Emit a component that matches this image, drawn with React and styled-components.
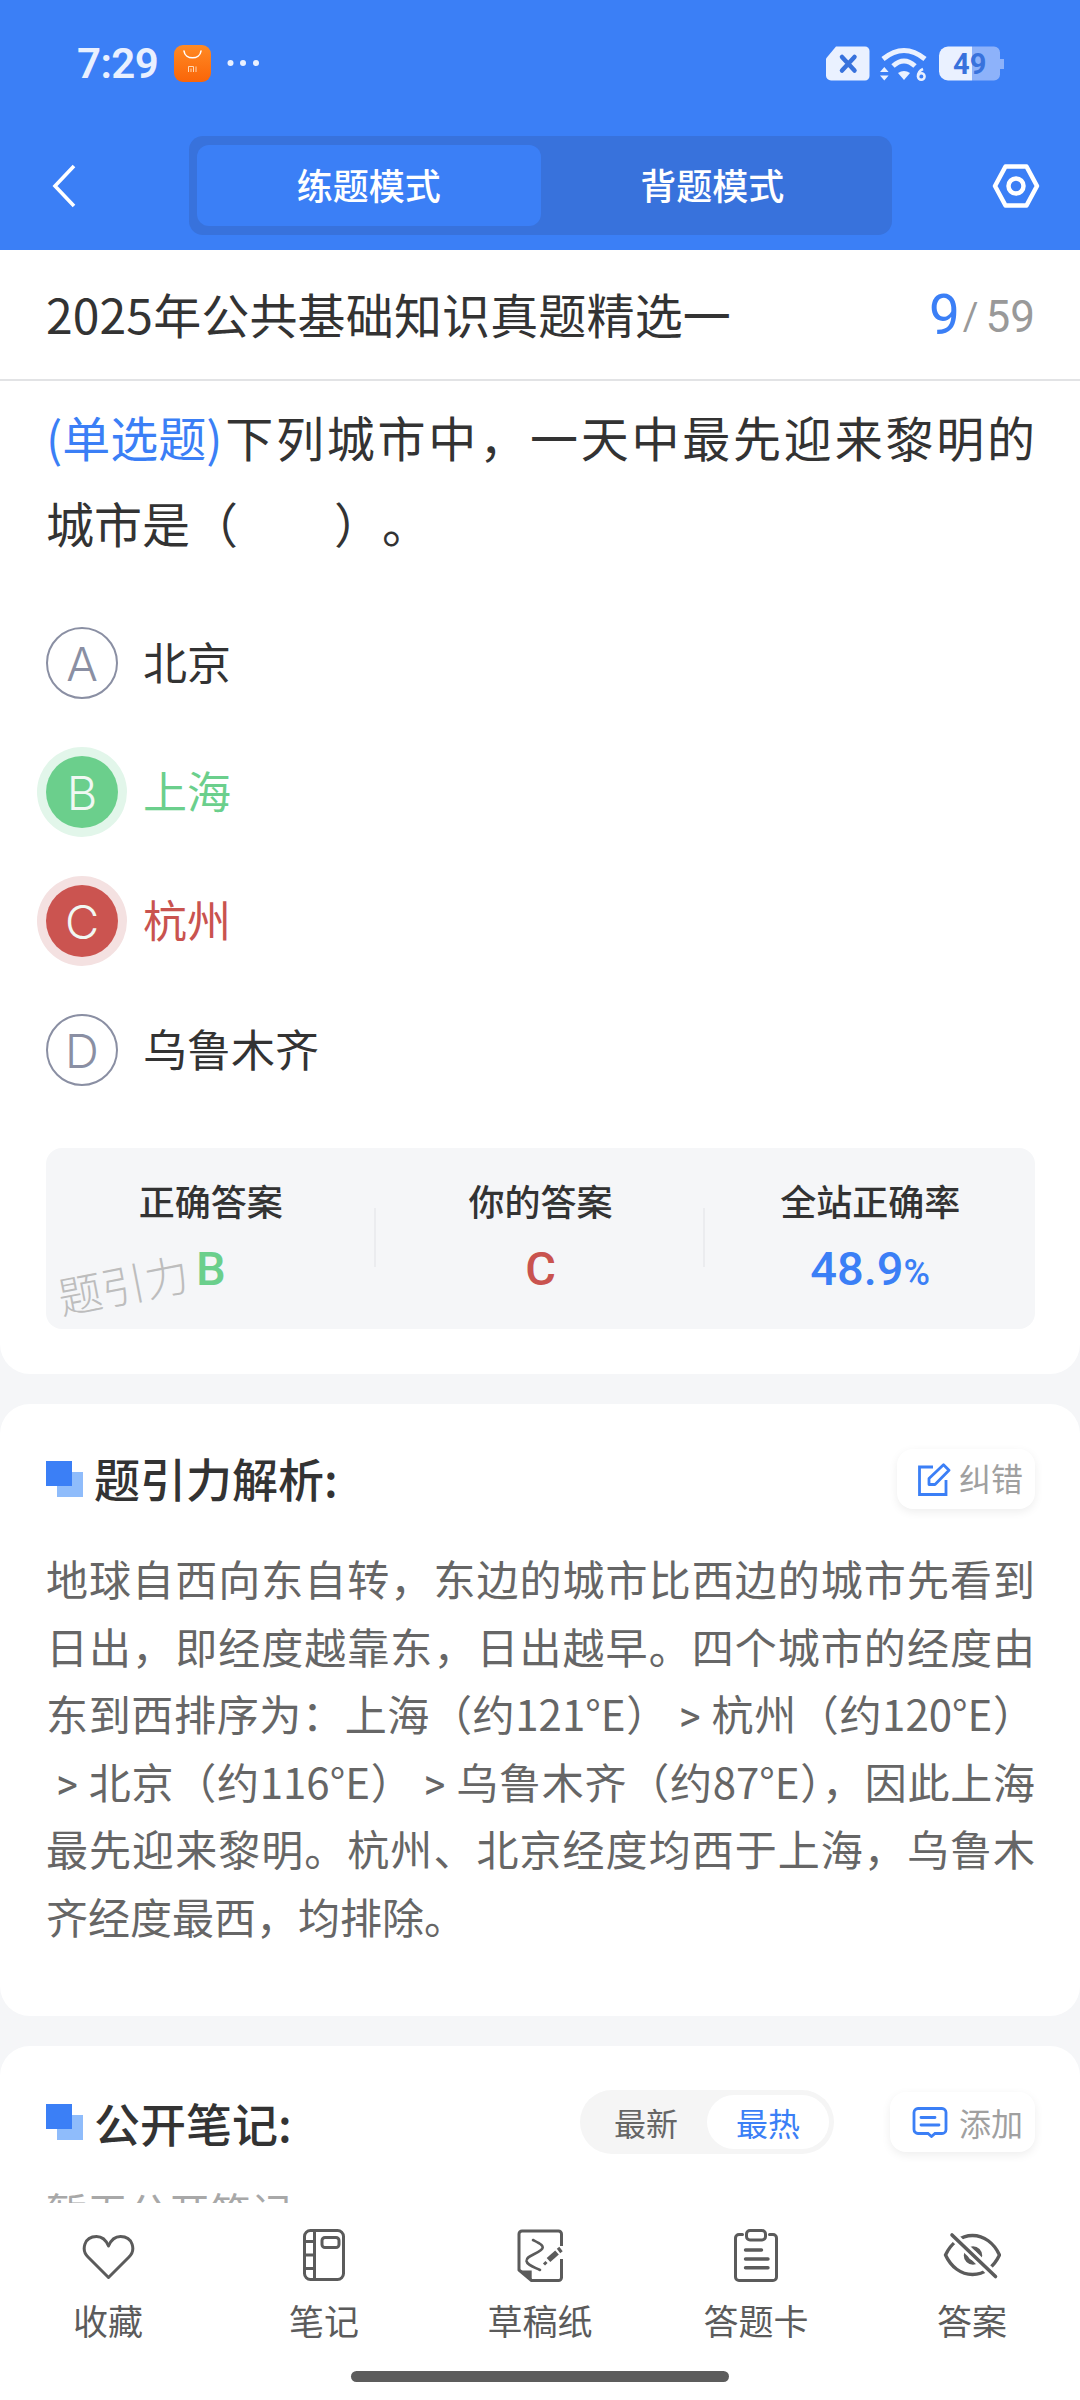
import React from "react";
import styled, { createGlobalStyle } from "styled-components";

const CJK = `"Noto Sans CJK SC", "Noto Sans", sans-serif`;
const BLUE = "#3b7ff6";

const Global = createGlobalStyle`
  html, body { margin: 0; padding: 0; background: #f5f6f8; }
  * { box-sizing: border-box; }
  #root { width: 1080px; height: 2400px; }
`;

const Page = styled.div`
  width: 1080px;
  height: 2400px;
  display: flex;
  flex-direction: column;
  overflow: hidden;
  font-family: ${CJK};
  color: #333;
  background: #f5f6f8;
`;
const Header = styled.header`
  height: 250px;
  flex: none;
  background: ${BLUE};
  display: flex;
  flex-direction: column;
`;
const StatusBar = styled.div`
  height: 136px;
  padding: 45px 76px 0 77px;
  display: flex;
  align-items: flex-start;
  justify-content: space-between;
`;
const StatusGroup = styled.div`
  display: flex;
  align-items: center;
  height: 36px;
`;
const Time = styled.span`
  font-family: Roboto, sans-serif;
  font-weight: 600;
  font-size: 42px;
  line-height: 36px;
  padding-top: 2px;
  color: #e9f0ff;
  width: 97px;
  letter-spacing: -0.6px;
`;
const NavBar = styled.div`
  height: 99px;
  padding: 0 40px 0 52px;
  display: flex;
  align-items: center;
  justify-content: space-between;
`;
const ModeSwitch = styled.div`
  width: 703px;
  height: 99px;
  margin-left: 13px;
  padding: 9px 8px;
  background: #3872dc;
  border-radius: 14px;
  display: grid;
  grid-template-columns: 1fr 1fr;
`;
const Mode = styled.div`
  display: flex;
  align-items: center;
  justify-content: center;
  padding-bottom: 4px;
  background: ${(p) => (p.$active ? BLUE : "transparent")};
  border-radius: 12px;
  color: #fff;
  font-size: 36px;
  font-weight: 500;
`;
const TitleBar = styled.div`
  height: 131px;
  flex: none;
  background: #fff;
  border-bottom: 2px solid #e2e3e5;
  padding: 0 45px 4px 46px;
  display: flex;
  align-items: center;
  justify-content: space-between;
`;
const PaperTitle = styled.div`
  font-size: 48px;
  line-height: 60px;
  letter-spacing: 0.15px;
  color: #333;
`;
const Counter = styled.div`
  display: flex;
  align-items: center;
  padding-top: 9px;
  font-family: Roboto, sans-serif;
  color: #999;
  font-size: 44px;
  line-height: 1;
`;
const Current = styled.span`
  color: ${BLUE};
  font-size: 55px;
  margin-bottom: 3px;
`;
const Slash = styled.span`
  font-size: 38px;
  margin: 0 7px 0 3px;
`;
const Scroll = styled.main`
  flex: 1;
  min-height: 0;
  overflow: hidden;
  display: flex;
  flex-direction: column;
  gap: 30px;
`;
const Card = styled.section`
  background: #fff;
  flex: none;
  height: ${(p) => p.$h}px;
  padding: ${(p) => p.$pad || "0 45px 0 46px"};
  border-radius: ${(p) => p.$radius || "30px"};
`;
const Question = styled.div`
  font-size: 48px;
  line-height: 86px;
  text-align: justify;
  text-spacing-trim: space-all;
  color: #333;
  padding-top: 12px;
  width: 989px;
`;
const Tag = styled.span`
  display: inline-block;
  color: ${BLUE};
`;
const Options = styled.div`
  display: flex;
  flex-direction: column;
  gap: 57px;
  margin-top: 62px;
`;
const Option = styled.div`
  display: flex;
  align-items: center;
  gap: 25px;
  height: 72px;
  font-size: 44px;
  color: ${(p) =>
    p.$state === "right" ? "#6bcf8c" : p.$state === "wrong" ? "#c9534f" : "#333"};
`;
const OptionText = styled.span`
  padding-bottom: 5px;
`;
const Bullet = styled.div`
  width: 72px;
  height: 72px;
  border-radius: 50%;
  flex: none;
  display: flex;
  align-items: center;
  justify-content: center;
  font-family: Inter, Roboto, sans-serif;
  font-weight: 300;
  font-size: 47px;
  color: ${(p) => (p.$state ? "#f1f8f3" : "#8a8fa3")};
  background: ${(p) =>
    p.$state === "right" ? "#6bcf8c" : p.$state === "wrong" ? "#cb5450" : "#fff"};
  border: ${(p) => (p.$state ? "none" : "2px solid #8a8fa3")};
  box-shadow: ${(p) =>
    p.$state === "right"
      ? "0 0 0 9px #e2f6ea"
      : p.$state === "wrong"
      ? "0 0 0 9px #f4e1e1"
      : "none"};
`;
const Stats = styled.div`
  position: relative;
  margin-top: 62px;
  height: 181px;
  width: 989px;
  background: #f5f6f8;
  border-radius: 16px;
  display: grid;
  grid-template-columns: repeat(3, 1fr);
  padding-top: 32px;
  overflow: hidden;
`;
const Stat = styled.div`
  position: relative;
  display: flex;
  flex-direction: column;
  align-items: center;
  &:not(:last-of-type)::after {
    content: "";
    position: absolute;
    right: 0;
    top: 28px;
    height: 59px;
    width: 2px;
    background: #ebecef;
  }
`;
const StatLabel = styled.div`
  font-size: 36px;
  line-height: 40px;
  font-weight: 500;
  color: #333;
`;
const StatValue = styled.div`
  margin-top: 24px;
  font-family: Roboto, sans-serif;
  font-size: 47px;
  line-height: 50px;
  font-weight: 500;
  color: ${(p) => p.$color};
`;
const Percent = styled.span`
  font-size: 36px;
`;
const Watermark = styled.span`
  position: absolute;
  left: 12px;
  top: 126px;
  font-size: 44px;
  line-height: 44px;
  color: #bdbdbd;
  font-weight: 300;
  transform: rotate(-11deg);
  transform-origin: left center;
`;
const SectionHead = styled.div`
  display: flex;
  align-items: center;
  justify-content: space-between;
  height: 62px;
`;
const Heading = styled.div`
  display: flex;
  align-items: center;
  gap: 11px;
`;
const HeadingText = styled.div`
  font-size: 46px;
  font-weight: 500;
  line-height: 60px;
  padding-bottom: ${(p) => p.$lift || 0}px;
  color: #333;
`;
const Actions = styled.div`
  display: flex;
  align-items: center;
  gap: 56px;
`;
const ActionButton = styled.div`
  height: 60px;
  padding: 0 12px 0 ${(p) => p.$pl}px;
  border-radius: 16px;
  background: #fff;
  box-shadow: 0 3px 10px rgba(0, 0, 0, 0.07);
  display: flex;
  align-items: center;
  gap: ${(p) => p.$gap}px;
  font-size: 32px;
  color: #a0a0a0;
`;
const ActionLabel = styled.span`
  padding-bottom: ${(p) => p.$lift || 0}px;
`;
const Sort = styled.div`
  width: 254px;
  height: 64px;
  padding: 5px;
  border-radius: 32px;
  background: #f5f5f5;
  display: grid;
  grid-template-columns: 122px 122px;
`;
const SortItem = styled.div`
  display: flex;
  align-items: center;
  justify-content: center;
  border-radius: 27px;
  font-size: 32px;
  color: ${(p) => (p.$active ? BLUE : "#666")};
  background: ${(p) => (p.$active ? "#fff" : "transparent")};
`;
const Analysis = styled.div`
  margin-top: 34px;
  width: 989px;
  font-size: 42px;
  line-height: 67.6px;
  color: #666;
  text-align: justify;
`;
const Gt = styled.span`
  display: inline-block;
  width: 42px;
  line-height: 1;
  text-align: center;
  font-family: Roboto, sans-serif;
`;
const EmptyNote = styled.div`
  margin-top: 29px;
  font-size: 41px;
  line-height: 56px;
  color: #a8a8a8;
`;
const BottomBar = styled.nav`
  height: 197px;
  flex: none;
  background: #fff;
  display: flex;
  flex-direction: column;
`;
const Tabs = styled.div`
  display: grid;
  grid-template-columns: repeat(5, 1fr);
  padding-top: 24px;
`;
const TabItem = styled.div`
  display: flex;
  flex-direction: column;
  align-items: center;
  color: #5b5b5b;
  font-size: 35px;
  line-height: 44px;
  gap: 15px;
`;
const IconBox = styled.div`
  height: 56px;
  display: flex;
  align-items: center;
  justify-content: center;
`;
const HomeIndicator = styled.div`
  width: 378px;
  height: 11px;
  border-radius: 6px;
  background: #5c5c5c;
  margin: 29px auto 0;
`;

const Squares = () => (
  <svg width="37" height="36" viewBox="0 0 37 36" style={{ flex: "none" }}>
    <rect x="11" y="11" width="26" height="25" fill="#8fbcfb" />
    <rect x="0" y="0" width="26" height="25" fill="#3b7ff6" />
  </svg>
);

const MiStore = () => (
  <svg width="37" height="37" viewBox="0 0 37 37" style={{ marginRight: 16 }}>
    <defs>
      <linearGradient id="mi" x1="0" y1="0" x2="0" y2="1">
        <stop offset="0" stopColor="#ff8a24" />
        <stop offset="1" stopColor="#fa6508" />
      </linearGradient>
    </defs>
    <rect width="37" height="37" rx="9" fill="url(#mi)" />
    <path d="M10 6c1 9 16 9 17 0" fill="none" stroke="#fff" strokeWidth="1.6" strokeLinecap="round" />
    <path d="M14.5 27v-5.500h5V27M17 23.500V27M22 21.500V27" fill="none" stroke="#ffd9b5" strokeWidth="1" />
  </svg>
);

const Dots = () => (
  <svg width="32" height="8" viewBox="0 0 32 8">
    <circle cx="3.500" cy="4" r="3" fill="#eaf1ff" />
    <circle cx="16" cy="4" r="3" fill="#eaf1ff" />
    <circle cx="29" cy="4" r="3" fill="#eaf1ff" />
  </svg>
);

const StatusIcons = () => (
  <svg width="178" height="37" viewBox="0 0 178 37">
    <path d="M10 1.500H39a4.500 4.500 0 0 1 4.500 4.500V31a4.500 4.500 0 0 1-4.500 4.500H5a5 5 0 0 1-5-5V13.500z" fill="#eaf1ff" />
    <path d="M16 12l12.500 13.500M28.500 12L16 25.500" stroke="#3872dc" strokeWidth="4.500" strokeLinecap="round" />
    <path d="M57 14Q78-3 99 14" fill="none" stroke="#eaf1ff" strokeWidth="5" />
    <path d="M67 21Q78 11 89 21" fill="none" stroke="#eaf1ff" strokeWidth="5" />
    <path d="M72 28Q78 24 84 28L78 35z" fill="#eaf1ff" />
    <path d="M54 27l4.300-5 4.300 5zM54 30.500h8.600l-4.300 5z" fill="#eaf1ff" />
    <circle cx="95.300" cy="31.500" r="3.300" fill="none" stroke="#eaf1ff" strokeWidth="2.500" />
    <path d="M92 31.500c0-3 1.500-6 5-7.500" fill="none" stroke="#eaf1ff" strokeWidth="2.500" />
    <path d="M146 1.500h22a6 6 0 0 1 6 6V14h4v10h-4v5.500a6 6 0 0 1-6 6h-22z" fill="#8db2fa" />
    <path d="M122 1.500h24v34h-24a9 9 0 0 1-9-9v-16a9 9 0 0 1 9-9z" fill="#eaf1ff" />
    <text x="127" y="29" fontFamily="Roboto, sans-serif" fontWeight="700" fontSize="29" fill="#3872dc">49</text>
  </svg>
);

const Back = () => (
  <svg width="24" height="44" viewBox="0 0 24 44">
    <path d="M22 2L3 22l19 20" fill="none" stroke="#fff" strokeWidth="3.600" />
  </svg>
);

const Gear = () => (
  <svg width="48" height="44" viewBox="0 0 48 44">
    <path d="M13.500 2.500h21L45 22 34.500 41.500h-21L3 22z" fill="none" stroke="#fff" strokeWidth="4.500" strokeLinejoin="round" />
    <circle cx="24" cy="22" r="7.500" fill="none" stroke="#fff" strokeWidth="4.500" />
  </svg>
);

const EditIcon = () => (
  <svg width="33" height="33" viewBox="0 0 33 33">
    <path d="M15 4H1.500v27.500H28V17" fill="none" stroke="#3b7ff6" strokeWidth="2.800" />
    <path d="M11 21.500v-6L25.500 1.800l5.500 5.500L17 21.500z" fill="none" stroke="#3b7ff6" strokeWidth="2.800" strokeLinejoin="round" />
  </svg>
);

const CommentIcon = () => (
  <svg width="36" height="31" viewBox="0 0 36 31">
    <path d="M6 1.500h24a4 4 0 0 1 4 4v17a4 4 0 0 1-4 4h-7l-3.500 3-3.500-3H6a4 4 0 0 1-4-4v-17a4 4 0 0 1 4-4z" fill="none" stroke="#3b7ff6" strokeWidth="2.800" />
    <path d="M9 10.500h14M9 18h18" stroke="#3b7ff6" strokeWidth="2.800" strokeLinecap="round" />
  </svg>
);

const stroke = { fill: "none", stroke: "#5b5b5b", strokeWidth: 3 };

const Heart = () => (
  <svg width="54" height="54" viewBox="0 0 54 54">
    <path d="M27.500 49.500L7 29C0 22 3 8.500 15.500 8.500 21 8.500 25 12 27.500 18 30 12 34 8.500 39.500 8.500 52 8.500 55 22 48 29z" {...stroke} strokeLinejoin="round" />
  </svg>
);
const Notebook = () => (
  <svg width="44" height="54" viewBox="0 0 44 54">
    <rect x="2.500" y="2.500" width="39" height="49" rx="6" {...stroke} />
    <path d="M12.500 2.500v49M2.500 13.500h10M2.500 27h10M2.500 40.500h10" {...stroke} />
    <rect x="20" y="9.500" width="17" height="10" rx="3" {...stroke} />
  </svg>
);
const Draft = () => (
  <svg width="46" height="54" viewBox="0 0 46 54">
    <path d="M44.500 18V6a3 3 0 0 0-3-3H5a3 3 0 0 0-3 3v36l12.500 10.500h27a3 3 0 0 0 3-3V31" {...stroke} strokeLinejoin="round" />
    <path d="M3 42.500h11.700V53z" fill="#5b5b5b" />
    <path d="M16 12C22 15 29 18 24 22 18 27 9 28 9.500 33 10 37 17 39 23 42" {...stroke} strokeWidth="2.600" strokeLinecap="round" />
    <path d="M31.500 32L40 24.500" fill="none" stroke="#5b5b5b" strokeWidth="5.500" />
    <path d="M41.500 23L44 21" fill="none" stroke="#5b5b5b" strokeWidth="5.500" />
    <path d="M27 36.500l2.500-2.500" fill="none" stroke="#5b5b5b" strokeWidth="3" />
  </svg>
);
const Clipboard = () => (
  <svg width="46" height="54" viewBox="0 0 46 54">
    <path d="M9.500 6.500H6A3.500 3.500 0 0 0 2.500 10v39A3.500 3.500 0 0 0 6 52.500h34a3.500 3.500 0 0 0 3.500-3.500V10A3.500 3.500 0 0 0 40 6.500h-3.500" {...stroke} strokeLinecap="round" />
    <rect x="13.500" y="2.500" width="19" height="9.500" rx="3.500" {...stroke} />
    <path d="M12.500 22h16M12.500 31h22.500M12.500 39.700h22.500" {...stroke} strokeWidth="3.400" strokeLinecap="round" />
  </svg>
);
const EyeOff = () => (
  <svg width="58" height="54" viewBox="0 0 58 54">
    <path d="M2.500 27C8 15 18 7.500 29.500 7.500S51 15 56.500 27C51 39 41 46.500 29.500 46.500S8 39 2.500 27z" {...stroke} strokeWidth="3.400" strokeLinejoin="round" />
    <circle cx="30" cy="27.500" r="7" {...stroke} strokeWidth="4.500" />
    <path d="M9 7l43.500 41.500" fill="none" stroke="#fff" strokeWidth="9" />
    <path d="M9 7l43.500 41.500" {...stroke} strokeWidth="3.600" strokeLinecap="round" />
  </svg>
);

const options = [
  { key: "A", text: "北京" },
  { key: "B", text: "上海", state: "right" },
  { key: "C", text: "杭州", state: "wrong" },
  { key: "D", text: "乌鲁木齐" },
];
const tabs = [
  { label: "收藏", Icon: Heart },
  { label: "笔记", Icon: Notebook },
  { label: "草稿纸", Icon: Draft },
  { label: "答题卡", Icon: Clipboard },
  { label: "答案", Icon: EyeOff },
];

export default function App() {
  return (
    <Page>
      <Global />
      <Header>
        <StatusBar>
          <StatusGroup>
            <Time>7:29</Time>
            <MiStore />
            <Dots />
          </StatusGroup>
          <StatusGroup>
            <StatusIcons />
          </StatusGroup>
        </StatusBar>
        <NavBar>
          <Back />
          <ModeSwitch>
            <Mode $active>练题模式</Mode>
            <Mode>背题模式</Mode>
          </ModeSwitch>
          <Gear />
        </NavBar>
      </Header>
      <TitleBar>
        <PaperTitle>2025年公共基础知识真题精选一</PaperTitle>
        <Counter>
          <Current>9</Current>
          <Slash>/</Slash>
          59
        </Counter>
      </TitleBar>
      <Scroll>
        <Card $h={993} $radius="0 0 30px 30px">
          <Question>
            <Tag>(单选题)</Tag>下列城市中，一天中最先迎来黎明的城市是（&emsp;&emsp;）。
          </Question>
          <Options>
            {options.map((o) => (
              <Option key={o.key} $state={o.state}>
                <Bullet $state={o.state}>{o.key}</Bullet>
                <OptionText>{o.text}</OptionText>
              </Option>
            ))}
          </Options>
          <Stats>
            <Stat>
              <StatLabel>正确答案</StatLabel>
              <StatValue $color="#6bcf8c">B</StatValue>
            </Stat>
            <Stat>
              <StatLabel>你的答案</StatLabel>
              <StatValue $color="#c9534f">C</StatValue>
            </Stat>
            <Stat>
              <StatLabel>全站正确率</StatLabel>
              <StatValue $color={BLUE}>
                48.9<Percent>%</Percent>
              </StatValue>
            </Stat>
            <Watermark>题引力</Watermark>
          </Stats>
        </Card>
        <Card $h={612} $pad="44px 45px 0 46px">
          <SectionHead>
            <Heading>
              <Squares />
              <HeadingText $lift={5}>题引力解析:</HeadingText>
            </Heading>
            <ActionButton $pl={21} $gap={8}>
              <EditIcon />
              <ActionLabel $lift={4}>纠错</ActionLabel>
            </ActionButton>
          </SectionHead>
          <Analysis>
            地球自西向东自转，东边的城市比西边的城市先看到日出，即经度越靠东，日出越早。四个城市的经度由东到西排序为：上海（约121°E）<Gt>&gt;</Gt>杭州（约120°E）<Gt>&gt;</Gt>北京（约116°E）<Gt>&gt;</Gt>乌鲁木齐（约87°E），因此上海最先迎来黎明。杭州、北京经度均西于上海，乌鲁木齐经度最西，均排除。
          </Analysis>
        </Card>
        <Card $h={300} $pad="45px 45px 0 46px">
          <SectionHead>
            <Heading>
              <Squares />
              <HeadingText>公开笔记:</HeadingText>
            </Heading>
            <Actions>
              <Sort>
                <SortItem>最新</SortItem>
                <SortItem $active>最热</SortItem>
              </Sort>
              <ActionButton $pl={22} $gap={11}>
                <CommentIcon />
                <ActionLabel>添加</ActionLabel>
              </ActionButton>
            </Actions>
          </SectionHead>
          <EmptyNote>暂无公开笔记</EmptyNote>
        </Card>
      </Scroll>
      <BottomBar>
        <Tabs>
          {tabs.map(({ label, Icon }) => (
            <TabItem key={label}>
              <IconBox>
                <Icon />
              </IconBox>
              {label}
            </TabItem>
          ))}
        </Tabs>
        <HomeIndicator />
      </BottomBar>
    </Page>
  );
}
